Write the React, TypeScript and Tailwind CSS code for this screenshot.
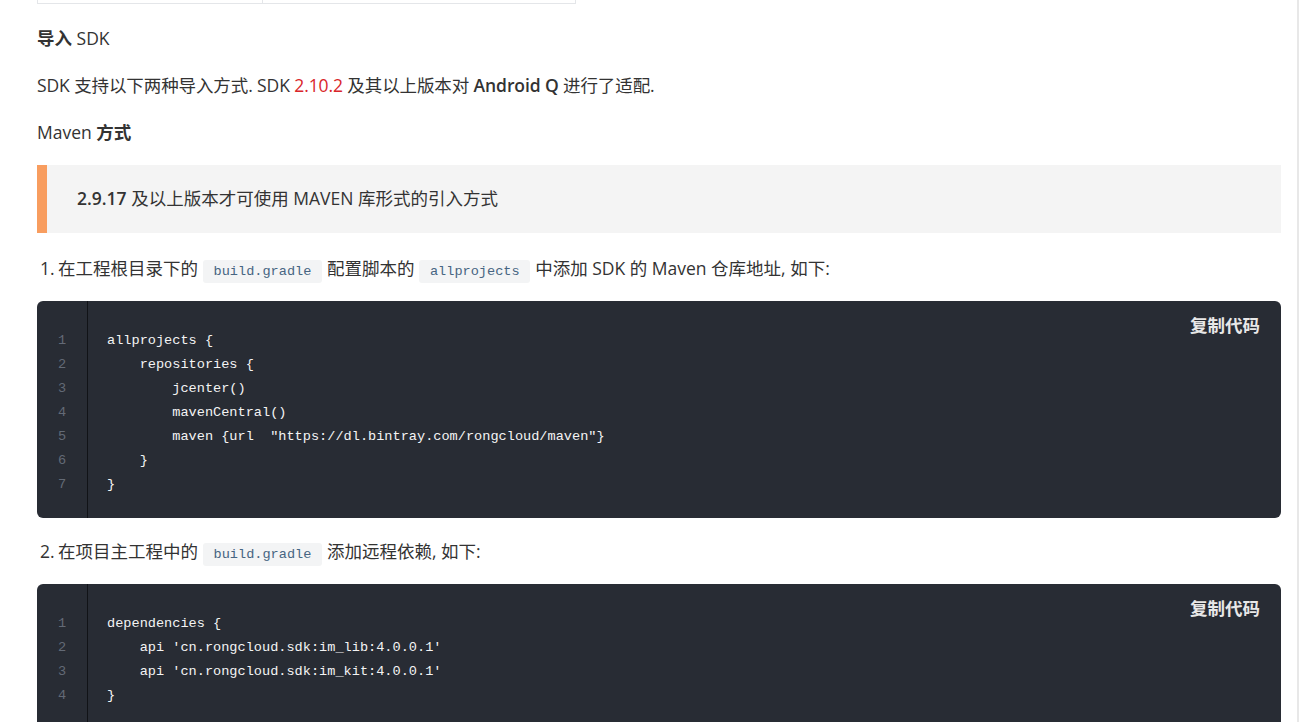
const body = "font-['Open_Sans','Noto_Sans_CJK_SC',sans-serif]";
const mono = "font-['Liberation_Mono','DejaVu_Sans_Mono',monospace]";

const InlineCode = ({ children }: { children: string }) => (
  <code
    className={`${mono} mx-[5px] rounded-[3px] bg-[#f3f4f5] px-[10.5px] py-[4px] text-[13.6px] leading-[21px] text-[#476582]`}
  >
    {children}
  </code>
);

const CodeBlock = ({ lines }: { lines: string[] }) => (
  <div className="relative flex rounded-[6px] bg-[#282c34]">
    <div
      className={`${mono} flex w-[51px] flex-col items-center border-r border-[#111317] pt-[28px] pb-[21px] text-[13.6px] leading-[24px] text-[#636a76]`}
    >
      {lines.map((_, i) => (
        <span key={i}>{i + 1}</span>
      ))}
    </div>
    <pre
      className={`${mono} m-0 flex-1 pt-[28px] pb-[21px] pl-[19px] text-[13.6px] leading-[24px] text-[#f4f4f4]`}
    >
      {lines.join("\n")}
    </pre>
    <button
      className={`${body} absolute top-[11px] right-[21px] text-[17.5px] font-bold text-[#e8e8e8]`}
    >
      复制代码
    </button>
  </div>
);

const App = () => {
  return (
    <div className={`${body} flex min-h-[722px] bg-white text-[17.5px] text-[#333]`}>
      <div className="w-[1299px] border-r-2 border-[#e8e8e8] pl-[37px] pr-[16px]">
        {/* tail of the table above */}
        <div className="flex h-[4px] w-[539px] border-x border-b border-[#e4e6e9]">
          <div className="w-[225px] border-r border-[#e4e6e9]" />
          <div className="flex-1" />
        </div>

        <h3 className="mt-[21px] leading-[27px]">
          <span className="font-bold">导入</span> <span className="font-medium">SDK</span>
        </h3>
        <p className="mt-[20px] leading-[27px] tracking-[-0.1px]">
          SDK 支持以下两种导入方式. SDK{" "}
          <span className="text-[#d9262b]">2.10.2</span> 及其以上版本对{" "}
          <strong className="font-semibold">Android Q</strong> 进行了适配.
        </p>
        <h4 className="mt-[20px] leading-[27px]">
          <span className="font-medium">Maven</span> <span className="font-bold">方式</span>
        </h4>

        <blockquote className="mt-[19px] border-l-[10px] border-[#f89d5f] bg-[#f4f4f4] pt-[20px] pb-[21px] pl-[30px] leading-[27px]">
          <strong className="font-semibold">2.9.17</strong> 及以上版本才可使用 MAVEN
          库形式的引入方式
        </blockquote>

        <ol className="mt-[21px]">
          <li className="flex flex-col">
            <div className="flex leading-[29px]">
              <span className="w-[21px] pl-[3px]">1.</span>
              <span>
                在工程根目录下的<InlineCode>build.gradle</InlineCode>配置脚本的
                <InlineCode>allprojects</InlineCode>中添加 SDK 的 Maven 仓库地址, 如下:
              </span>
            </div>
            <div className="mt-[18px]">
              <CodeBlock
                lines={[
                  "allprojects {",
                  "    repositories {",
                  "        jcenter()",
                  "        mavenCentral()",
                  '        maven {url  "https://dl.bintray.com/rongcloud/maven"}',
                  "    }",
                  "}",
                ]}
              />
            </div>
          </li>
          <li className="mt-[19px] flex flex-col">
            <div className="flex leading-[29px]">
              <span className="w-[21px] pl-[3px]">2.</span>
              <span>
                在项目主工程中的<InlineCode>build.gradle</InlineCode>添加远程依赖, 如下:
              </span>
            </div>
            <div className="mt-[18px]">
              <CodeBlock
                lines={[
                  "dependencies {",
                  "    api 'cn.rongcloud.sdk:im_lib:4.0.0.1'",
                  "    api 'cn.rongcloud.sdk:im_kit:4.0.0.1'",
                  "}",
                ]}
              />
            </div>
          </li>
        </ol>
      </div>
    </div>
  );
};

export default App;
